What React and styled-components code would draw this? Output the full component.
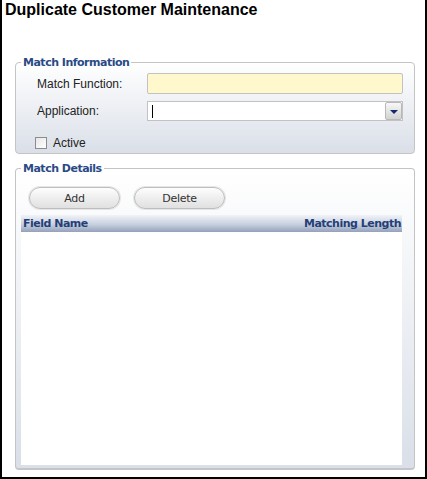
import React from "react";
import styled, { createGlobalStyle } from "styled-components";

const GlobalStyle = createGlobalStyle`
  html, body {
    margin: 0;
    padding: 0;
    background: #fff;
  }
  body {
    font-family: "Liberation Sans", Arial, sans-serif;
  }
`;

const Page = styled.div`
  box-sizing: border-box;
  width: 427px;
  height: 479px;
  border: 2px solid #000;
  border-top: none;
  padding: 0 10px 7px 13px;
  display: flex;
  flex-direction: column;
`;

const Title = styled.h1`
  margin: 0 0 0 -10px;
  font: bold 16px/20px "Liberation Sans", Arial, sans-serif;
  color: #000;
`;

const Fieldset = styled.fieldset`
  box-sizing: border-box;
  margin: ${(p) => p.top}px 0 0 0;
  padding: 0;
  min-width: 0;
  border: 1px solid #c4c4c4;
  border-bottom: ${(p) => (p.grow ? "2px solid #c2c5cc" : "1px solid #c4c4c4")};
  border-radius: 4px;
  background: linear-gradient(#ffffff, #dadfe8);
  display: flex;
  flex-direction: column;
  flex: ${(p) => (p.grow ? 1 : "none")};
`;

const Legend = styled.legend`
  margin-left: 5px;
  padding: 0 2px;
  font: bold 11px/13px "DejaVu Sans", Verdana, sans-serif;
  letter-spacing: -0.5px;
  color: #2a4a85;
`;

const InfoBody = styled.div`
  padding: 4px 11px 3px 21px;
  display: flex;
  flex-direction: column;
`;

const FormRow = styled.div`
  display: grid;
  grid-template-columns: 110px 1fr;
  align-items: center;
  margin-top: ${(p) => p.gap || 0}px;
`;

const Label = styled.label`
  font-size: 12px;
  color: #222;
`;

const TextInput = styled.div`
  box-sizing: border-box;
  height: 21px;
  border: 1px solid #c2c2c2;
  border-radius: 2px;
  background: #fff8cc;
`;

const Select = styled.div`
  box-sizing: border-box;
  height: 20px;
  border: 1px solid #c2c2c2;
  background: #fff;
  display: flex;
  align-items: center;
  padding-left: 4px;
`;

const Caret = styled.span`
  width: 1px;
  height: 13px;
  background: #000;
`;

const DropButton = styled.span`
  box-sizing: border-box;
  margin-left: auto;
  width: 17px;
  height: 18px;
  border: 1px solid #b9b9b9;
  border-radius: 2px;
  background: linear-gradient(#f8f8f8, #d2d2d2);
  display: flex;
  align-items: center;
  justify-content: center;
`;

const Arrow = styled.span`
  width: 0;
  height: 0;
  border-left: 4px solid transparent;
  border-right: 4px solid transparent;
  border-top: 4px solid #102a6c;
  margin-top: 1px;
`;

const CheckRow = styled.div`
  display: flex;
  align-items: center;
  gap: 6px;
  margin: 15px 0 0 -2px;
  font-size: 12px;
  color: #222;
`;

const Box = styled.span`
  box-sizing: border-box;
  width: 12px;
  height: 12px;
  border: 1px solid #8c8c8c;
  background: linear-gradient(135deg, #e6e6e6, #ffffff);
`;

const DetailsBody = styled.div`
  flex: 1;
  padding: 12px 12px 3px 5px;
  display: flex;
  flex-direction: column;
`;

const ButtonBar = styled.div`
  display: flex;
  gap: 14px;
  padding-left: 8px;
  margin-bottom: 6px;
`;

const Button = styled.button`
  box-sizing: border-box;
  width: 91px;
  height: 22px;
  border: 1px solid #bdbdbd;
  border-radius: 11px;
  background: linear-gradient(#fdfdfd, #e0e0e0);
  box-shadow: 0 0 0 1px #e6e6e6;
  font: 11px "DejaVu Sans", Verdana, sans-serif;
  letter-spacing: -0.3px;
  color: #333;
  padding: 0;
`;

const Grid = styled.div`
  flex: 1;
  display: flex;
  flex-direction: column;
  background: #fff;
`;

const GridHeader = styled.div`
  height: 17px;
  display: flex;
  justify-content: space-between;
  align-items: center;
  padding: 0 1px 0 2px;
  background: linear-gradient(#f1f3f7 0%, #c8d0de 55%, #93a1bb 100%);
  font: bold 11px/17px "DejaVu Sans", Verdana, sans-serif;
  letter-spacing: -0.5px;
  color: #243f78;
`;

export default function App() {
  return (
    <>
      <GlobalStyle />
      <Page>
        <Title>Duplicate Customer Maintenance</Title>

        <Fieldset top={36}>
          <Legend>Match Information</Legend>
          <InfoBody>
            <FormRow>
              <Label>Match Function:</Label>
              <TextInput />
            </FormRow>
            <FormRow gap={7}>
              <Label>Application:</Label>
              <Select>
                <Caret />
                <DropButton>
                  <Arrow />
                </DropButton>
              </Select>
            </FormRow>
            <CheckRow>
              <Box />
              Active
            </CheckRow>
          </InfoBody>
        </Fieldset>

        <Fieldset top={8} grow>
          <Legend>Match Details</Legend>
          <DetailsBody>
            <ButtonBar>
              <Button>Add</Button>
              <Button>Delete</Button>
            </ButtonBar>
            <Grid>
              <GridHeader>
                <span>Field Name</span>
                <span>Matching Length</span>
              </GridHeader>
            </Grid>
          </DetailsBody>
        </Fieldset>
      </Page>
    </>
  );
}
